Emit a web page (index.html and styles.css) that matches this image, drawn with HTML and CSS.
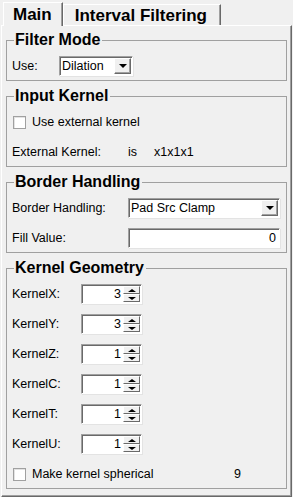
FILE: index.html
```html
<!DOCTYPE html>
<html lang="en">
<head>
    <meta charset="UTF-8">
    <meta name="viewport" content="width=device-width, initial-scale=1.0">
    <title>Morphology</title>
    <link rel="stylesheet" href="styles.css">
</head>
<body>

    <!-- Pestañas -->
    <div class="tabs">
        <div class="tab tab-active">Main</div>
        <div class="tab">Interval Filtering</div>
    </div>

    <div class="panel">

        <fieldset class="group">
            <legend>Filter Mode</legend>
            <div class="row">
                <span class="label label-use">Use:</span>
                <div class="combo combo-small">
                    <span class="combo-text">Dilation</span>
                    <span class="combo-btn"><span class="arrow-down"></span></span>
                </div>
            </div>
        </fieldset>

        <fieldset class="group">
            <legend>Input Kernel</legend>
            <div class="row">
                <span class="check"></span>
                <span class="check-text">Use external kernel</span>
            </div>
            <div class="row">
                <span class="label label-wide">External Kernel:</span>
                <span class="is-text">is</span>
                <span class="dims-text">x1x1x1</span>
            </div>
        </fieldset>

        <fieldset class="group">
            <legend>Border Handling</legend>
            <div class="row">
                <span class="label label-wide">Border Handling:</span>
                <div class="combo combo-wide">
                    <span class="combo-text">Pad Src Clamp</span>
                    <span class="combo-btn"><span class="arrow-down"></span></span>
                </div>
            </div>
            <div class="row">
                <span class="label label-wide">Fill Value:</span>
                <div class="field field-wide">0</div>
            </div>
        </fieldset>

        <fieldset class="group">
            <legend>Kernel Geometry</legend>
            <div class="row">
                <span class="label label-kernel">KernelX:</span>
                <div class="spin"><span class="spin-value">3</span><span class="spin-btns"><span class="spin-up"><span class="arrow-up"></span></span><span class="spin-down"><span class="arrow-down"></span></span></span></div>
            </div>
            <div class="row">
                <span class="label label-kernel">KernelY:</span>
                <div class="spin"><span class="spin-value">3</span><span class="spin-btns"><span class="spin-up"><span class="arrow-up"></span></span><span class="spin-down"><span class="arrow-down"></span></span></span></div>
            </div>
            <div class="row">
                <span class="label label-kernel">KernelZ:</span>
                <div class="spin"><span class="spin-value">1</span><span class="spin-btns"><span class="spin-up"><span class="arrow-up"></span></span><span class="spin-down"><span class="arrow-down"></span></span></span></div>
            </div>
            <div class="row">
                <span class="label label-kernel">KernelC:</span>
                <div class="spin"><span class="spin-value">1</span><span class="spin-btns"><span class="spin-up"><span class="arrow-up"></span></span><span class="spin-down"><span class="arrow-down"></span></span></span></div>
            </div>
            <div class="row">
                <span class="label label-kernel">KernelT:</span>
                <div class="spin"><span class="spin-value">1</span><span class="spin-btns"><span class="spin-up"><span class="arrow-up"></span></span><span class="spin-down"><span class="arrow-down"></span></span></span></div>
            </div>
            <div class="row">
                <span class="label label-kernel">KernelU:</span>
                <div class="spin"><span class="spin-value">1</span><span class="spin-btns"><span class="spin-up"><span class="arrow-up"></span></span><span class="spin-down"><span class="arrow-down"></span></span></span></div>
            </div>
            <div class="row">
                <span class="check"></span>
                <span class="check-text check-long">Make kernel spherical</span>
                <span class="count">9</span>
            </div>
        </fieldset>

    </div>

</body>
</html>
```

FILE: styles.css
```css
* {
    box-sizing: border-box;
}

body {
    margin: 0;
    background: #f0f0f0;
    font-family: "Liberation Sans", Arial, sans-serif;
    font-size: 12.5px;
    color: #000;
    width: 293px;
    height: 497px;
    overflow: hidden;
}

/* Pestañas */
.tabs {
    display: flex;
    align-items: flex-end;
    height: 25px;
    padding-left: 3px;
}

.tab {
    height: 21px;
    padding: 0 13px 0 11px;
    font-size: 17px;
    font-weight: bold;
    line-height: 21px;
    border-top: 1px solid #fff;
    border-left: 1px solid #fff;
    border-right: 1px solid #696969;
    box-shadow: inset -1px 0 #a0a0a0;
}

.tab-active {
    position: relative;
    height: 24px;
    margin-bottom: -1px;
    padding: 0 10px 0 9px;
    line-height: 24px;
    background: #f0f0f0;
    z-index: 1;
}

/* Panel principal */
.panel {
    margin-left: 1px;
    width: 291px;
    height: 472px;
    padding: 5px 4px 0 4px;
    border-top: 1px solid #fff;
    border-left: 1px solid #fff;
    border-right: 1px solid #696969;
    border-bottom: 1px solid #696969;
    box-shadow: inset -1px -1px #a0a0a0;
    display: flex;
    flex-direction: column;
    gap: 6px;
}

.group {
    margin: 0;
    padding: 7px 6px 4px 5px;
    border: 1px solid #a0a0a0;
    display: flex;
    flex-direction: column;
    gap: 10px;
}

.group legend {
    margin-left: 2px;
    padding: 0 2px 0 1px;
    font-size: 16px;
    font-weight: bold;
    line-height: 18px;
}

.row {
    display: flex;
    align-items: center;
    height: 20px;
}

.label {
    flex: none;
}

.label-use {
    width: 47px;
}

.label-wide {
    width: 116px;
}

.label-kernel {
    width: 69px;
}

/* Combos y campos */
.combo,
.field,
.spin {
    display: flex;
    height: 20px;
    background: #fff;
    border-top: 1px solid #a0a0a0;
    border-left: 1px solid #a0a0a0;
    border-right: 1px solid #fff;
    border-bottom: 1px solid #fff;
    box-shadow: inset 1px 1px #696969, 1px 1px #e3e3e3;
}

.combo-small {
    width: 74px;
}

.combo-wide {
    flex: 1;
}

.combo-text {
    flex: 1;
    padding-left: 2px;
    line-height: 18px;
    white-space: nowrap;
}

.combo-btn {
    width: 17px;
    margin: 1px 1px 1px 0;
    background: #f0f0f0;
    border-top: 1px solid #fff;
    border-left: 1px solid #fff;
    border-right: 1px solid #696969;
    border-bottom: 1px solid #696969;
    box-shadow: inset -1px -1px #a0a0a0;
    display: flex;
    align-items: center;
    justify-content: center;
}

.arrow-down {
    width: 0;
    height: 0;
    border-left: 4px solid transparent;
    border-right: 4px solid transparent;
    border-top: 4px solid #000;
}

.arrow-up {
    width: 0;
    height: 0;
    border-left: 4px solid transparent;
    border-right: 4px solid transparent;
    border-bottom: 4px solid #000;
}

.field-wide {
    flex: 1;
    justify-content: flex-end;
    padding-right: 3px;
    line-height: 18px;
}

.spin {
    width: 61px;
}

.spin-value {
    flex: 1;
    text-align: right;
    padding-right: 2px;
    line-height: 18px;
}

.spin-btns {
    width: 17px;
    margin: 1px 1px 1px 0;
    display: flex;
    flex-direction: column;
}

.spin-up,
.spin-down {
    flex: 1;
    background: #f0f0f0;
    border-top: 1px solid #fff;
    border-left: 1px solid #fff;
    border-right: 1px solid #696969;
    border-bottom: 1px solid #696969;
    display: flex;
    align-items: center;
    justify-content: center;
}

.spin-up .arrow-up {
    border-width: 0 4px 3px 4px;
}

.spin-down .arrow-down {
    border-width: 3px 4px 0 4px;
}

/* Casillas */
.check {
    flex: none;
    width: 13px;
    height: 13px;
    margin-left: 1px;
    background: #fff;
    border: 1px solid #a0a0a0;
    box-shadow: inset 1px 1px #e3e3e3;
}

.check-text {
    margin-left: 6px;
}

.check-long {
    width: 202px;
}

.is-text {
    width: 26px;
}

.dims-text {
    white-space: nowrap;
}
```
